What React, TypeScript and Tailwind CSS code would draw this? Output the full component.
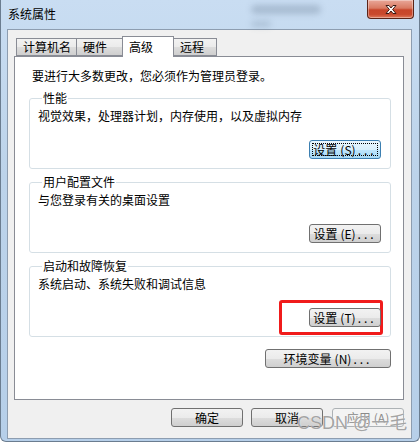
import clsx from "clsx"
import type { ReactNode } from "react"

const cjk = "font-['Noto_Sans_CJK_SC','Microsoft_YaHei',sans-serif]"

function WinButton({
  children,
  className,
  focused,
  disabled,
}: {
  children: ReactNode
  className?: string
  focused?: boolean
  disabled?: boolean
}) {
  return (
    <div
      className={clsx(
        "relative flex h-[19px] items-center justify-center rounded-[3px] border text-[12px] leading-none",
        focused
          ? "border-[#3c7fb1] bg-[linear-gradient(to_bottom,#eaf6fd_0%,#d9f0fc_50%,#bee6fd_51%,#a7d9f5_100%)] text-black"
          : disabled
            ? "border-[#adb2b5] bg-[#f4f4f4] text-[#8a8a8a]"
            : "border-[#707070] bg-[linear-gradient(to_bottom,#f2f2f2_0%,#ebebeb_50%,#dddddd_51%,#cfcfcf_100%)] text-black",
        className,
      )}
    >
      {focused && <span className="absolute inset-[2px] border border-dotted border-black" />}
      <span className="relative">{children}</span>
    </div>
  )
}

// label like 设置 (S)... with the wide spacing of the classic dialog font
function Mnemonic({ text, letter, dots }: { text: string; letter: string; dots?: boolean }) {
  return (
    <>
      {text}
      <span className="ml-[3px]">({letter})</span>
      {dots && <span className="ml-[2px] tracking-[3px]">...</span>}
    </>
  )
}

function Group({ title, text, children }: { title: string; text: string; children: ReactNode }) {
  return (
    <fieldset className="rounded-[3px] border border-[#d5dfe5] px-[8px] pb-[9px] pr-[9px]">
      <legend className="ml-[4px] px-[1px] text-[12px] leading-[16px]">{title}</legend>
      <div className="mt-[3px] text-[12px] leading-[14px]">{text}</div>
      <div className="mt-[17px] flex justify-end">{children}</div>
    </fieldset>
  )
}

function Tab({ label, width, selected }: { label: string; width: string; selected?: boolean }) {
  return (
    <div
      className={clsx(
        "-mr-px border border-[#898c95] pl-[6px] text-[12px]",
        width,
        selected
          ? "relative z-10 h-[21px] border-b-0 bg-white pt-[2px] leading-[16px]"
          : "mt-[2px] h-[18px] bg-[linear-gradient(to_bottom,#f2f2f2_0%,#ebebeb_50%,#dddddd_51%,#cfcfcf_100%)] leading-[16px]",
      )}
    >
      {label}
    </div>
  )
}

export default function App() {
  return (
    <div
      className={clsx(
        "relative flex h-[442px] w-[420px] flex-col overflow-hidden rounded-b-[6px] border-x border-b border-[#6b7d90] bg-[linear-gradient(to_bottom,#c9ddf2_0%,#bcd3ea_40%,#b6cfe9_100%)] text-black",
        cjk,
      )}
    >
      {/* title bar */}
      <div className="relative flex h-[29px] items-start justify-between">
        <div className="pointer-events-none absolute left-[250px] top-[5px] h-[9px] w-[70px] rounded-full bg-[#5b6f86] opacity-30 blur-[3px]" />
        <div className="pointer-events-none absolute left-[250px] top-[21px] h-[6px] w-[20px] rounded-full bg-[#5b6f86] opacity-25 blur-[3px]" />
        <span className="relative ml-[7px] mt-[6px] text-[12px] leading-[16px] text-black">系统属性</span>
        <div className="relative mr-[5px] flex h-[19px] w-[47px] items-center justify-center rounded-b-[4px] border border-t-0 border-[#5b2418] bg-[linear-gradient(to_bottom,#e9a899_0%,#d97a62_45%,#c7452a_55%,#c9492d_80%,#df7a5c_100%)] shadow-[inset_0_0_0_1px_rgba(255,255,255,0.35)]">
          <svg width="14" height="11" viewBox="0 0 14 11">
            <path
              d="M2 1.5 L5 1.5 L7 4 L9 1.5 L12 1.5 L8.6 5.5 L12 9.5 L9 9.5 L7 7 L5 9.5 L2 9.5 L5.4 5.5 Z"
              fill="#ffffff"
              stroke="#3b1a14"
              strokeWidth="1"
              strokeLinejoin="round"
            />
          </svg>
        </div>
      </div>

      {/* client area */}
      <div className="ml-[6px] mr-[7px] flex h-[410px] flex-col border border-[#8d9db0] bg-[#f0f0f0]">
        <div className="ml-[8px] mt-[6px] flex">
          <Tab label="计算机名" width="w-[61px]" />
          <Tab label="硬件" width="w-[47px]" />
          <Tab label="高级" width="w-[52px]" selected />
          <Tab label="远程" width="w-[44px]" />
        </div>

        <div className="relative -mt-px ml-[6px] mr-[7px] flex h-[344px] flex-col border border-[#898c95] bg-white">
          <div className="pl-[17px] pt-[12px] text-[12px] leading-[14px]">要进行大多数更改，您必须作为管理员登录。</div>

          <div className="ml-[14px] mr-[12px] mt-[7px] flex flex-col gap-[5px]">
            <Group title="性能" text="视觉效果，处理器计划，内存使用，以及虚拟内存">
              <WinButton focused className="w-[72px]">
                <Mnemonic text="设置" letter="S" dots />
              </WinButton>
            </Group>
            <Group title="用户配置文件" text="与您登录有关的桌面设置">
              <WinButton className="w-[72px]">
                <Mnemonic text="设置" letter="E" dots />
              </WinButton>
            </Group>
            <Group title="启动和故障恢复" text="系统启动、系统失败和调试信息">
              <div className="relative">
                <span className="pointer-events-none absolute -bottom-[8px] -left-[30px] -right-[2px] -top-[8px] rounded-[3px] border-[3px] border-[#f01b1b]" />
                <WinButton className="w-[72px]">
                  <Mnemonic text="设置" letter="T" dots />
                </WinButton>
              </div>
            </Group>
          </div>

          <div className="ml-[14px] mr-[12px] mt-[12px] flex justify-end">
            <WinButton className="w-[126px]">
              <Mnemonic text="环境变量" letter="N" dots />
            </WinButton>
          </div>
        </div>

        <div className="mr-[7px] mt-[8px] flex justify-end">
          <WinButton className="w-[72px]">确定</WinButton>
          <WinButton className="ml-[8px] w-[72px]">取消</WinButton>
          <WinButton disabled className="ml-[9px] w-[72px]">
            <Mnemonic text="应用" letter="A" />
          </WinButton>
        </div>
      </div>

      {/* watermark */}
      <span className="pointer-events-none absolute left-[296px] top-[410px] font-['Liberation_Sans','Noto_Sans_CJK_SC',sans-serif] text-[18px] leading-[26px] text-[#8c8c8c]/80 [text-shadow:0_0_1px_#ffffff]">
        CSDN @一毛
      </span>
    </div>
  )
}
